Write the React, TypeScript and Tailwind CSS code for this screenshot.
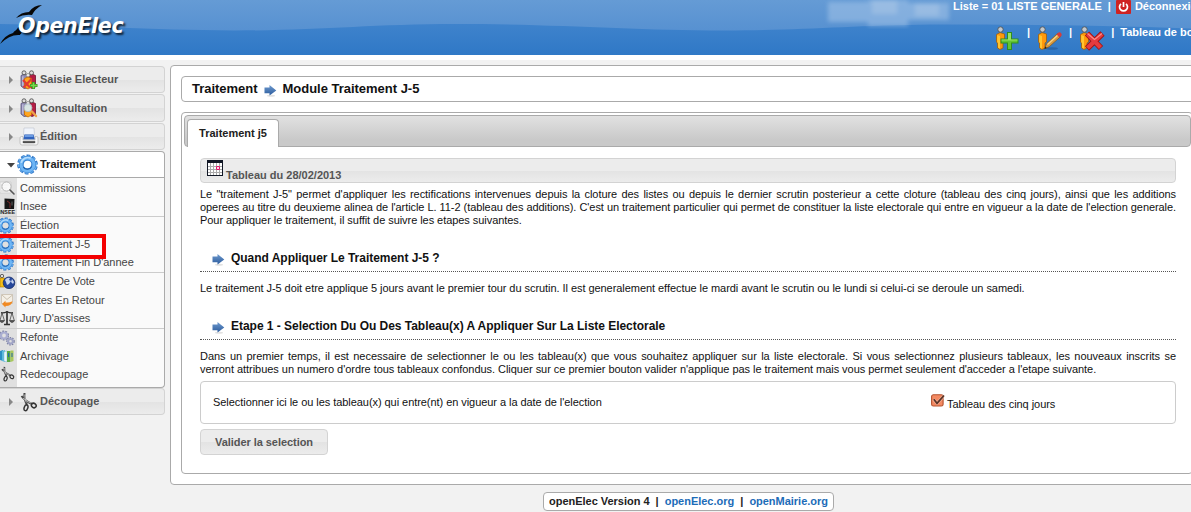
import type { ReactNode } from 'react';

type IconProps = { className?: string };

function GearIcon({ className = '' }: IconProps) {
  return (
    <svg viewBox="0 0 20 20" className={className}>
      <g transform="rotate(12 10 10)">
        <ellipse cx="10" cy="10" rx="8.6" ry="8.2" fill="none" stroke="#2b72c4" strokeWidth="2.6" strokeDasharray="3.4 1.85" />
        <ellipse cx="10" cy="10" rx="8.4" ry="8" fill="none" stroke="#6db4f3" strokeWidth="1.6" strokeDasharray="2.8 2.45" strokeDashoffset="-.3" />
        <circle cx="10" cy="10" r="5.9" fill="none" stroke="#3a84d2" strokeWidth="4.6" />
        <circle cx="10" cy="10" r="6.2" fill="none" stroke="#6fb6f5" strokeWidth="3" />
      </g>
      <path d="M4 8.500A6.500 6.500 0 0 1 13 4" fill="none" stroke="#b5dcfc" strokeWidth="1.500" />
      <path d="M6 12.500A4.600 4.600 0 0 0 14 12" fill="none" stroke="#1f5ea8" strokeWidth="1" />
    </svg>
  );
}

function PeopleIcon({ kind }: { kind: 'edit' | 'search' }) {
  return (
    <svg viewBox="0 0 20 20" className="size-5">
      <path d="M2 5.500 5 4l4 1.500V18l-4 .5L2 16z" fill="#8f8bb5" stroke="#555078" strokeWidth=".8" />
      <path d="M3 6.500v9l1.500 1V6z" fill="#b9b6d6" />
      <path d="M10 5.500 13 4l3.500 1.500V17L13 18.500 10 17z" fill="#b51d45" stroke="#6c1230" strokeWidth=".8" />
      <circle cx="5" cy="2.800" r="2" fill="#ddd" stroke="#555" strokeWidth=".9" />
      <circle cx="12.500" cy="2.800" r="2" fill="#ddd" stroke="#555" strokeWidth=".9" />
      <circle cx="9" cy="5.300" r="1.800" fill="#eee" stroke="#666" strokeWidth=".6" />
      <path d="M5.500 8.500 9 7l3.500 1.500V17L9 19l-3.500-2z" fill="#ffa51e" stroke="#c66c00" strokeWidth=".8" />
      {kind === 'edit' ? (
        <>
          <path d="m4 10 7 7.500M12.500 9 4.500 17.500" stroke="#e23a32" strokeWidth="2.200" />
          <path d="M14.500 12v7M11 15.500h7.500" stroke="#3d9d22" strokeWidth="3" />
          <path d="M14.500 12.800v5.400M11.800 15.500h5.900" stroke="#79d950" strokeWidth="1.400" />
        </>
      ) : (
        <>
          <circle cx="9" cy="9.800" r="4" fill="#d5eaf4" fillOpacity=".92" stroke="#a8b6be" strokeWidth=".8" />
          <path d="m13 13.500 4 4.500" stroke="#eda14b" strokeWidth="2.400" strokeLinecap="round" />
        </>
      )}
    </svg>
  );
}

function PrinterIcon() {
  return (
    <svg viewBox="0 0 20 20" className="size-5">
      <path d="M5 1h10l.5 7h-11z" fill="#f0f4fb" stroke="#c4c9d2" strokeWidth=".7" />
      <path d="M5.500 7.500h9L16 12.500H4z" fill="#2f62bd" />
      <path d="M6 8h8l.5 2h-9z" fill="#6b9be2" />
      <path d="M1 11q0-1.500 1.500-1.500H4V13h12V9.500h1.500Q19 9.500 19 11v5q0 2-2 2H3q-2 0-2-2z" fill="#f6f6f6" stroke="#b9b9b9" strokeWidth=".8" />
      <path d="M3.800 14.300h12.400v1.500H3.800z" fill="#222" />
      <path d="M4.500 16h11v2.500h-11z" fill="#d9d9d9" />
    </svg>
  );
}

function ScissorsIcon({ className = '' }: IconProps) {
  return (
    <svg viewBox="0 0 18 20" className={className} fill="none">
      <path d="M4.500 1c-.500 4 .500 8 2.500 12M1.500 4c3 4 6 6 10.500 8" stroke="#444" strokeWidth="2" />
      <path d="M4.800 2.500c0 3 .500 5 1.500 8M3 6c3 2.500 5 4 8 5" stroke="#d5d5d5" strokeWidth=".8" />
      <ellipse cx="6" cy="15.800" rx="1.800" ry="3" stroke="#333" strokeWidth="1.500" transform="rotate(18 6 15.800)" />
      <ellipse cx="13.800" cy="13.500" rx="2.500" ry="2.100" stroke="#333" strokeWidth="1.500" transform="rotate(40 13.800 13.500)" />
    </svg>
  );
}

function MagnifierIcon() {
  return (
    <svg viewBox="0 0 16 16" className="size-4">
      <path d="M0 2h11v11H0z" fill="#f3f3f3" stroke="#c9c9c9" strokeWidth=".7" />
      <path d="M1 5h8M1 8h6M1 11h7" stroke="#c9c9c9" strokeWidth=".7" />
      <circle cx="6.500" cy="6.500" r="4.600" fill="#fafafa" fillOpacity=".8" stroke="#b5b5b5" strokeWidth="1" />
      <path d="m10 10 4 4" stroke="#555" strokeWidth="1.600" strokeLinecap="round" />
    </svg>
  );
}

function InseeIcon() {
  return (
    <svg viewBox="0 0 16 16" className="size-4">
      <path d="m4.500 .500 10 .500-.500 10H4.500z" fill="#161616" />
      <path d="m7 3 3 2v5" fill="none" stroke="#a33" strokeWidth=".7" />
      <path d="M12 3.500v4" stroke="#777" strokeWidth=".8" />
      <text x="-1" y="15.800" fontFamily="Liberation Sans" fontWeight="700" fontSize="5" textLength="16" lengthAdjust="spacingAndGlyphs" fill="#222">
        INSEE
      </text>
    </svg>
  );
}

function GlobeIcon() {
  return (
    <svg viewBox="0 0 16 16" className="size-4">
      <circle cx="2" cy="2" r="1.700" fill="#ddd" stroke="#444" strokeWidth=".8" />
      <path d="M0 4h4.500v9H0z" fill="#f6bd16" stroke="#a87400" strokeWidth=".6" />
      <circle cx="9" cy="8.800" r="5.800" fill="#26479b" stroke="#152c6b" strokeWidth=".8" />
      <path d="M5 6q2-3 5-2l-1 2 2 1-2 3-2 1-1-3zM12 5l2 3-1 2-2-2z" fill="#c6d4f0" />
    </svg>
  );
}

function MailIcon() {
  return (
    <svg viewBox="0 0 16 16" className="size-4">
      <path d="M1.500 2.500h11v9h-11z" fill="#f4efe6" stroke="#c9bfae" strokeWidth=".8" />
      <path d="m2 3 5 4.500L12.500 3" fill="none" stroke="#c9bfae" />
      <path d="M2 12 5.500 8.800v1.700q5 0 7-1.500-.500 5-7 5v1.500z" fill="#f08a24" />
    </svg>
  );
}

function ScalesIcon() {
  return (
    <svg viewBox="0 0 16 16" className="size-4" fill="none" stroke="#333">
      <path d="M7 1v13M4 14.500h6" strokeWidth="1.700" />
      <path d="M1 2.700q3 .500 6-1 3 1.500 6 1" strokeWidth="1.200" />
      <path d="m2 3-2 7.500M2 3l2.400 7.500M12 3 9.800 10.500M12 3l2.300 7.500" strokeWidth=".7" />
      <path d="M-.5 10.500h5q-1 2-2.500 2t-2.500-2zM9.500 10.500h5q-1 2-2.500 2t-2.500-2z" fill="#555" strokeWidth=".6" />
    </svg>
  );
}

function GearsIcon() {
  return (
    <svg viewBox="0 0 16 16" className="size-4" fill="none">
      <circle cx="4" cy="5.500" r="4.300" stroke="#7c81a3" strokeWidth="1.500" strokeDasharray="1.900 1.100" />
      <circle cx="4" cy="5.500" r="3" stroke="#a9add0" strokeWidth="2.200" />
      <circle cx="10.500" cy="11.300" r="3.600" stroke="#7c81a3" strokeWidth="1.400" strokeDasharray="1.600 1" />
      <circle cx="10.500" cy="11.300" r="2.300" stroke="#a0a4c6" strokeWidth="2" />
    </svg>
  );
}

function ArchiveIcon() {
  return (
    <svg viewBox="0 0 16 16" className="size-4">
      <path d="m0 3 3-1v11l-3-1z" fill="#2c8fc4" />
      <path d="m2 3 3-1v12l-3-1z" fill="#5cb9dc" />
      <path d="m4 4 3-1v11l-3-1z" fill="#e9f6fb" stroke="#7fb9d0" strokeWidth=".5" />
      <path d="M7 3h3.500v11H7z" fill="#5aa945" />
      <path d="M10.500 2.500h3V13l-3 1z" fill="#a9c85d" />
      <path d="M8 5h1.200v4H8zM11.500 5h1v4h-1z" fill="#2868a8" />
    </svg>
  );
}

function ArrowIcon({ className = '' }: IconProps) {
  return (
    <svg viewBox="0 0 13 13" className={className}>
      <defs>
        <linearGradient id="arrowBlue" x2="0" y2="1">
          <stop stopColor="#6f9bcf" />
          <stop offset="1" stopColor="#2a5a9c" />
        </linearGradient>
      </defs>
      <ellipse cx="7" cy="11.700" rx="4" ry="1" fill="#e2e2e2" />
      <path d="M.5 3.500H5.500V1l6.800 5.500L5.500 11.500V9.300H.5z" fill="url(#arrowBlue)" />
    </svg>
  );
}

function CalendarIcon() {
  return (
    <svg viewBox="0 0 16 16" className="mt-px size-4">
      <path d="M0 0h16v16H0z" fill="#111725" />
      <path d="M1 3h14v12H1z" fill="#fff" />
      <path d="M3.500 3v12M6.500 3v12M9.500 3v12M12.500 3v12M1 6.500h14M1 9.500h14M1 12.500h14" stroke="#aaa" strokeWidth="1" />
      <path d="M9.500 6.500h3v3h-3z" fill="#ffd9e8" stroke="#e0186c" strokeWidth="1" />
    </svg>
  );
}

function PersonAction({ kind }: { kind: 'add' | 'edit' | 'delete' }) {
  return (
    <svg viewBox="0 0 26 26" className="h-[26px] w-[26px] shrink-0">
      <path d="M1.500 8.500 5 6.500l4.500 1.500v8l-1.500 1v5L5 23.500 2.500 22v-5l-1-1z" fill="#ff980b" stroke="#9a6010" strokeWidth=".8" />
      <path d="M2.200 9 5 10v12.700L3 21.500V17l-.8-1z" fill="#ffc52f" />
      <circle cx="5.500" cy="3.500" r="2.700" fill="#c3c8cc" stroke="#4b535c" strokeWidth=".9" />
      {kind === 'add' && (
        <>
          <path d="M12 6h5v6.500h6.500v5H17V24h-5v-6.500H5.500v-5H12z" fill="#2f8d1e" />
          <path d="M13 7h3v6.500h6.500v3H16V23h-3v-6.500H6.500v-3H13z" fill="#62c435" />
          <path d="M13 7h3v6.500h6.500v1h-16v-1H13z" fill="#98e065" />
        </>
      )}
      {kind === 'edit' && (
        <>
          <ellipse cx="15" cy="22.500" rx="6" ry="1.300" fill="#1d4f8e" fillOpacity=".5" />
          <path d="m7.500 23 1.800-5L20.500 7.500l3.200 3L12.500 20.500z" fill="#d99a3e" stroke="#80551c" strokeWidth=".7" />
          <path d="m10.500 18.500 10.500-9.500" stroke="#f6d48b" strokeWidth="1.200" />
          <path d="m19.500 8.500 2-2q1.500-.500 2.500.500t.500 2.500l-1.800 2z" fill="#d83b3b" />
          <path d="m7.500 23 .8-2.500 1.600 1.600z" fill="#222" />
        </>
      )}
      {kind === 'delete' && (
        <>
          <path d="M8 7.500 22 22M23.500 7.500 8 22.500" stroke="#a11414" strokeWidth="6" />
          <path d="M8.500 8 21.500 21.500M23 8 8.500 22" stroke="#e63b3f" strokeWidth="4.200" />
          <path d="m8.500 7.500 7 6 7.500-6" fill="none" stroke="#ff8d85" strokeWidth="1.100" />
        </>
      )}
    </svg>
  );
}

function PowerIcon() {
  return (
    <svg viewBox="0 0 15 14" className="h-[14px] w-[15px]">
      <rect width="15" height="14" rx="1" fill="#cf2222" />
      <path d="M5 3.800a4 4 0 1 0 5 0M7.500 2v5" fill="none" stroke="#fff" strokeWidth="1.700" />
    </svg>
  );
}

function CheckIcon() {
  return (
    <svg viewBox="0 0 14 13" className="h-[13px] w-[14px]">
      <rect x=".6" y=".8" width="11.500" height="11.200" rx="1.800" fill="#f48a63" stroke="#b5532f" strokeWidth="1.100" />
      <path d="m2.500 5.300 3.500 4L13 1.800" fill="none" stroke="#fff" strokeOpacity=".35" strokeWidth="3" />
      <path d="m2.800 5.300 3.200 4L13 1.500" fill="none" stroke="#5a3326" strokeWidth="1.800" />
    </svg>
  );
}

const glossy = 'bg-[linear-gradient(#ececec_0%,#ececec_50%,#e3e3e3_51%,#ececec_100%)]';

function MenuHeader({ icon, label, height }: { icon: ReactNode; label: string; height: string }) {
  return (
    <div className={`${height} ${glossy} box-border flex items-center rounded-r border border-l-0 border-[#d3d3d3]`}>
      <svg viewBox="0 0 4 8" className="ml-[9px] mt-px h-2 w-1">
        <path d="M0 0v8l4-4z" fill="#888" />
      </svg>
      <span className="ml-[5px] flex w-[22px] items-center justify-center">{icon}</span>
      <span className="font-bold text-[#555]">{label}</span>
    </div>
  );
}

function SubItem({ icon, label }: { icon: ReactNode; label: string }) {
  return (
    <li className="flex h-[18.34px] items-center">
      <span className="flex w-[17px] shrink-0 justify-start overflow-hidden">{icon}</span>
      <a className="ml-[3px] whitespace-nowrap tracking-[-0.02px]">{label}</a>
    </li>
  );
}

const smallGear = <GearIcon className="-ml-[3px] size-[17px] shrink-0" />;

const groups: { label: string; icon: ReactNode }[][] = [
  [
    { label: 'Commissions', icon: <MagnifierIcon /> },
    { label: 'Insee', icon: <InseeIcon /> },
  ],
  [
    { label: 'Élection', icon: smallGear },
    { label: 'Traitement J-5', icon: smallGear },
    { label: "Traitement Fin D'annee", icon: smallGear },
  ],
  [
    { label: 'Centre De Vote', icon: <GlobeIcon /> },
    { label: 'Cartes En Retour', icon: <MailIcon /> },
    { label: "Jury D'assises", icon: <ScalesIcon /> },
  ],
  [
    { label: 'Refonte', icon: <GearsIcon /> },
    { label: 'Archivage', icon: <ArchiveIcon /> },
    { label: 'Redecoupage', icon: <ScissorsIcon className="h-4 w-4" /> },
  ],
];

function Header() {
  return (
    <header className="relative h-[55px] shrink-0 overflow-hidden text-white">
      <svg className="absolute inset-0" width="1191" height="55" viewBox="0 0 1191 55">
        <defs>
          <linearGradient id="sky" gradientUnits="userSpaceOnUse" x1="0" y1="24" x2="0" y2="55">
            <stop stopColor="#3f83cc" />
            <stop offset="1" stopColor="#2f78c6" />
          </linearGradient>
          <linearGradient id="shine" x2="0" y2="1">
            <stop stopColor="#659bd5" />
            <stop offset="1" stopColor="#5791d1" />
          </linearGradient>
          <filter id="soft"><feGaussianBlur stdDeviation="2" /></filter>
        </defs>
        <path d="M0 0h1191v55H0z" fill="url(#sky)" />
        <path d="M0 0h1191v28.500C1100 25 1000 24.200 930 24.500 850 25.500 800 30.500 725 30.500 630 30.500 560 24 455 24 370 24 320 30.500 235 30.500 150 30 80 25 0 24z" fill="url(#shine)" />
        <g fill="#a9c8ea" filter="url(#soft)" opacity=".5">
          <path d="M828 2h45v20h-45zM868 0h40v26h-40zM906 3h43v17h-43z" />
          <path d="M872 0h25v14h-25zM915 4h24v12h-24z" fill="#d0e0f2" />
        </g>
      </svg>
      <svg className="absolute left-0 top-0" width="140" height="55" viewBox="0 0 140 55">
        <path d="M16 18Q21 12 29 12 34 5 42 5 35 9 32 15 24 14 16 18z" fill="#080808" />
        <path d="M0 44Q5 35 13 33 16 28 22 30L20 35Q10 34 0 44z" fill="#080808" />
        <path d="M15 33q2-7 9-8l-3 9z" fill="#080808" />
      </svg>
      <div className="relative flex h-full justify-between">
        <span className="ml-[18px] mt-[14px] font-['DejaVu_Sans'] text-[20.500px] font-bold italic leading-6 tracking-[-0.3px] [text-shadow:2px_2px_2px_rgba(0,0,0,0.75)]">
          OpenElec
        </span>
        <div className="w-[238px] whitespace-nowrap font-bold">
          <div className="flex h-[13px] items-center">
            <span>Liste = 01 LISTE GENERALE</span>
            <span className="ml-[6px]">|</span>
            <span className="ml-[5px]"><PowerIcon /></span>
            <span className="ml-[4px]">Déconnexion</span>
          </div>
          <div className="ml-[42px] mt-[13px] flex items-start">
            <PersonAction kind="add" />
            <span className="ml-[6px]">|</span>
            <span className="ml-[7px] shrink-0"><PersonAction kind="edit" /></span>
            <span className="ml-[6px]">|</span>
            <span className="ml-[7px] shrink-0"><PersonAction kind="delete" /></span>
            <span className="ml-[6px]">|</span>
            <span className="ml-[6px]">Tableau de bord</span>
          </div>
        </div>
      </div>
    </header>
  );
}

function Sidebar() {
  return (
    <nav className="relative mt-[6px] flex w-[165px] shrink-0 flex-col">
      <MenuHeader height="h-[27px]" label="Saisie Electeur" icon={<PeopleIcon kind="edit" />} />
      <div className="h-px" />
      <MenuHeader height="h-[28px]" label="Consultation" icon={<PeopleIcon kind="search" />} />
      <div className="h-px" />
      <MenuHeader height="h-[27px]" label="Édition" icon={<PrinterIcon />} />
      <div className="mt-px flex h-[27px] items-center rounded-tr border border-l-0 border-[#aaa] bg-white">
        <svg viewBox="0 0 8 5" className="ml-[7px] mt-px h-[5px] w-2">
          <path d="M0 0h8L4 4.500z" fill="#444" />
        </svg>
        <span className="ml-[2px] flex w-[23px]"><GearIcon className="size-[21px]" /></span>
        <span className="font-bold text-[#212121]">Traitement</span>
      </div>
      <div className="h-[210px] rounded-br border border-l-0 border-t-0 border-[#aaa] bg-[linear-gradient(90deg,#e0e0e0_17px,#fafafa_17px)] pt-[1px] text-[#444]">
        {groups.map((group, i) => (
          <ul key={i} className={i > 0 ? 'border-t border-[#ccc]' : ''}>
            {group.map((item) => (
              <SubItem key={item.label} {...item} />
            ))}
          </ul>
        ))}
      </div>
      <MenuHeader height="h-[27px]" label="Découpage" icon={<ScissorsIcon className="h-5 w-[18px]" />} />
      <div className="absolute -left-1 top-[168px] h-[25px] w-[110px] border-4 border-[#f40000]" />
    </nav>
  );
}

function SectionTitle({ children }: { children: ReactNode }) {
  return (
    <h3 className="flex h-[22px] items-center border-b border-dotted border-[#555] pb-[5px] pl-3 text-[12px] font-bold tracking-[-0.03px] text-[#111]">
      <ArrowIcon className="mt-[3px] size-[13px]" />
      <span className="ml-[6px]">{children}</span>
    </h3>
  );
}

function Line({ children }: { children: ReactNode }) {
  return <span className="block whitespace-normal text-justify [text-align-last:justify]">{children}</span>;
}

function Content() {
  return (
    <div className="flex flex-col pl-4 pr-[14px] pt-[11px] tracking-[-0.055px] text-[#111]">
      <div className={`${glossy} flex h-[25px] rounded border border-[#d3d3d3] pl-[6px]`}>
        <CalendarIcon />
        <span className="ml-[3px] mt-[10px] font-bold tracking-normal text-[#555]">Tableau du 28/02/2013</span>
      </div>
      <p className="mt-[5px]">
        <Line>Le "traitement J-5" permet d'appliquer les rectifications intervenues depuis la cloture des listes ou depuis le dernier scrutin posterieur a cette cloture (tableau des cinq jours), ainsi que les additions</Line>
        <span className="block text-justify tracking-[-0.075px] [text-align-last:justify]">operees au titre du deuxieme alinea de l'article L. 11-2 (tableau des additions). C'est un traitement particulier qui permet de constituer la liste electorale qui entre en vigueur a la date de l'election generale.</span>
        Pour appliquer le traitement, il suffit de suivre les etapes suivantes.
      </p>
      <div className="mt-[23px]"><SectionTitle>Quand Appliquer Le Traitement J-5 ?</SectionTitle></div>
      <p className="mt-[10px]">
        Le traitement J-5 doit etre applique 5 jours avant le premier tour du scrutin. Il est generalement effectue le mardi avant le scrutin ou le lundi si celui-ci se deroule un samedi.
      </p>
      <div className="mt-[23px]"><SectionTitle>Etape 1 - Selection Du Ou Des Tableau(x) A Appliquer Sur La Liste Electorale</SectionTitle></div>
      <p className="mt-[10px] tracking-[-0.04px]">
        <Line>Dans un premier temps, il est necessaire de selectionner le ou les tableau(x) que vous souhaitez appliquer sur la liste electorale. Si vous selectionnez plusieurs tableaux, les nouveaux inscrits se</Line>
        verront attribues un numero d'ordre tous tableaux confondus. Cliquer sur ce premier bouton valider n'applique pas le traitement mais vous permet seulement d'acceder a l'etape suivante.
      </p>
      <div className="mt-[5px] flex h-[43px] items-center rounded border border-[#ccc] pl-3">
        <span className="w-[718px]">Selectionner ici le ou les tableau(x) qui entre(nt) en vigueur a la date de l'election</span>
        <span className="flex items-start">
          <CheckIcon />
          <span className="ml-[2px] mt-[4px]">Tableau des cinq jours</span>
        </span>
      </div>
      <button className={`${glossy} mt-[5px] h-[26px] w-[128px] rounded border border-[#d3d3d3] font-bold text-[#555]`}>
        Valider la selection
      </button>
    </div>
  );
}

export default function App() {
  return (
    <div className="flex h-[512px] w-[1191px] flex-col overflow-hidden bg-white font-['Liberation_Sans',Arial,sans-serif] text-[11px] leading-[13px]">
      <Header />
      <div className="mt-[5px] flex h-[452px] shrink-0 flex-col bg-[#f2f2f2]">
        <div className="flex">
          <Sidebar />
          <main className="ml-[5px] mt-[5px] h-[420px] w-[1040px] shrink-0 rounded border border-[#aaa] bg-white pl-[10px] pt-[10px]">
            <h2 className="flex h-[26px] w-[1040px] items-center rounded border border-[#aaa] pl-[10px] text-[13px] font-bold tracking-[-0.02px] text-[#111]">
              <span className="-mt-[2px]">Traitement</span>
              <ArrowIcon className="ml-[6px] mr-[6px] mt-[3px] size-[13px]" />
              <span className="-mt-[2px]">Module Traitement J-5</span>
            </h2>
            <section className="mt-[10px] h-[362px] w-[1012px] rounded border border-[#aaa] p-[2px]">
              <div className="flex h-[32px] w-[1007px] items-end rounded border border-[#aaa] bg-[linear-gradient(#e1e1e1,#c9c9c9_80%,#c9c9c9)] pl-[2px]">
                <div className="-mb-px flex h-[28px] w-[92px] items-center justify-center rounded-t border border-b-0 border-[#aaa] bg-white font-bold text-[#212121]">
                  Traitement j5
                </div>
              </div>
              <div className="w-[1006px]"><Content /></div>
            </section>
          </main>
        </div>
        <footer className="mt-[7px] flex">
          <div className="ml-[543px] flex h-[19px] w-[291px] shrink-0 items-center whitespace-pre rounded border border-[#aaa] bg-white pl-[5px] font-bold tracking-[-0.02px] text-[#222]">
            openElec Version 4{'  |  '}
            <a className="text-[#1c6cb8]">openElec.org</a>
            {'  |  '}
            <a className="text-[#1c6cb8]">openMairie.org</a>
          </div>
        </footer>
      </div>
    </div>
  );
}
